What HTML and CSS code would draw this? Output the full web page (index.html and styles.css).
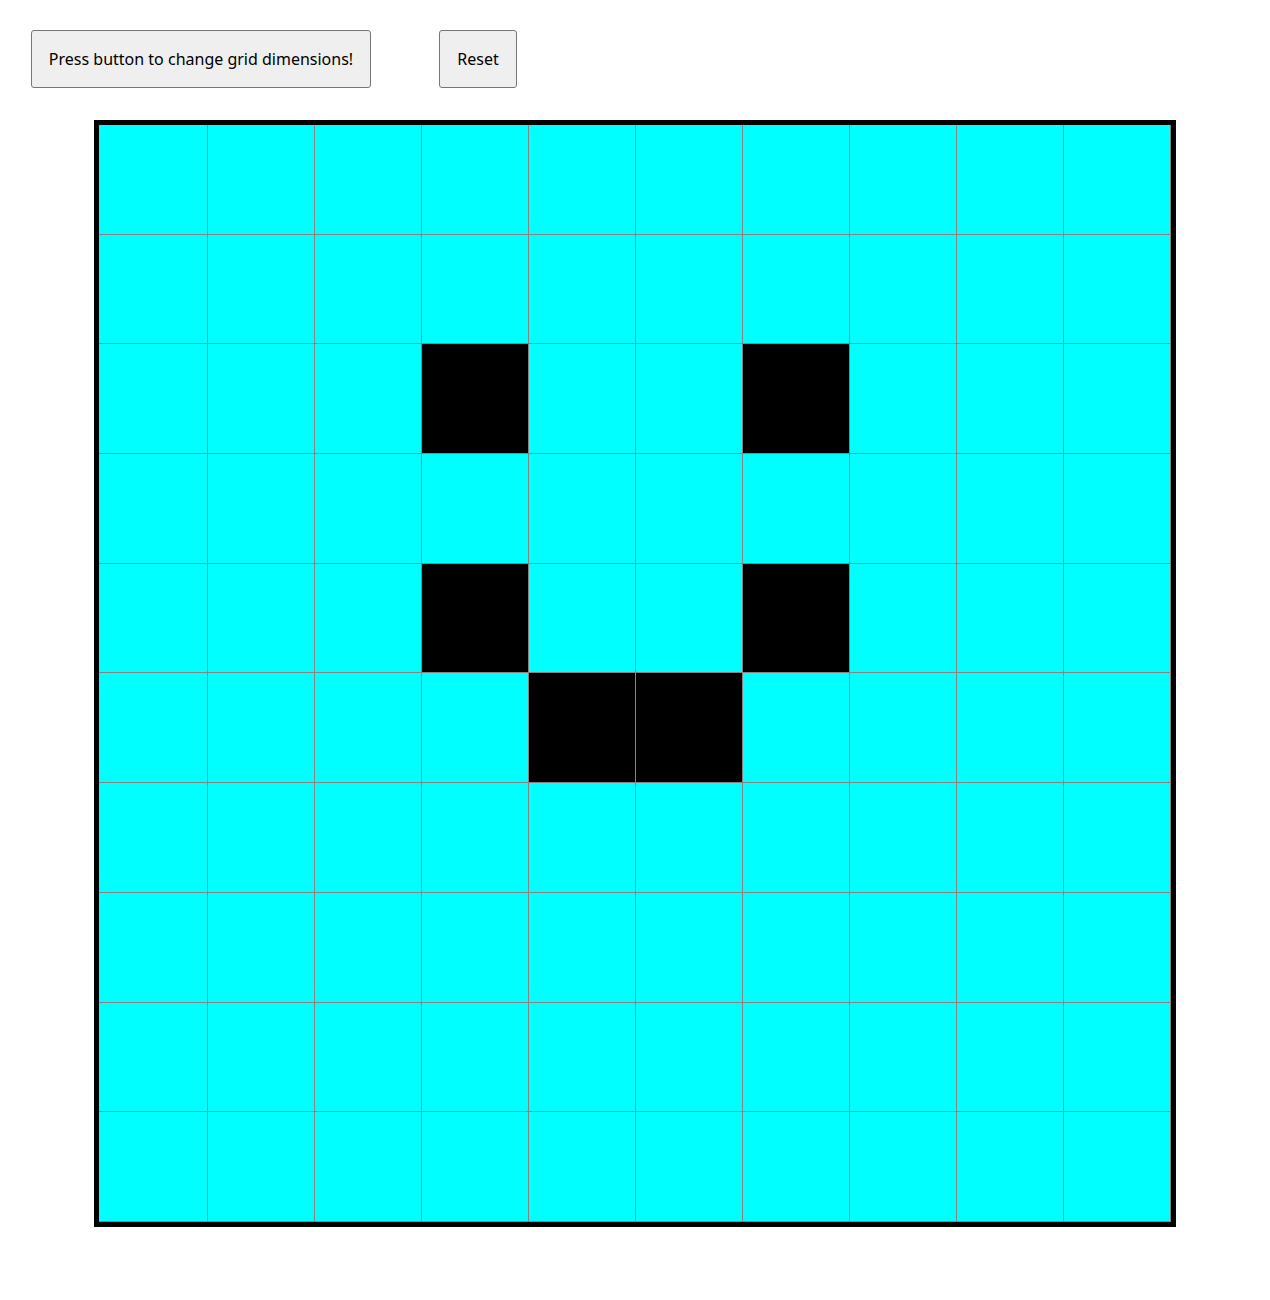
FILE: index.html
```html
<!DOCTYPE html>
<html>
<head>
<meta charset="utf-8">
<link rel="stylesheet" href="styles.css">
</head>
<body>
<div class="controls">
  <button class="btn btn-change">Press button to change grid dimensions!</button>
  <button class="btn btn-reset">Reset</button>
</div>
<div class="grid">
  <div class="cell"></div><div class="cell"></div><div class="cell"></div><div class="cell"></div><div class="cell"></div><div class="cell"></div><div class="cell"></div><div class="cell"></div><div class="cell"></div><div class="cell"></div>
  <div class="cell"></div><div class="cell"></div><div class="cell"></div><div class="cell"></div><div class="cell"></div><div class="cell"></div><div class="cell"></div><div class="cell"></div><div class="cell"></div><div class="cell"></div>
  <div class="cell"></div><div class="cell"></div><div class="cell"></div><div class="cell on"></div><div class="cell"></div><div class="cell"></div><div class="cell on"></div><div class="cell"></div><div class="cell"></div><div class="cell"></div>
  <div class="cell"></div><div class="cell"></div><div class="cell"></div><div class="cell"></div><div class="cell"></div><div class="cell"></div><div class="cell"></div><div class="cell"></div><div class="cell"></div><div class="cell"></div>
  <div class="cell"></div><div class="cell"></div><div class="cell"></div><div class="cell on"></div><div class="cell"></div><div class="cell"></div><div class="cell on"></div><div class="cell"></div><div class="cell"></div><div class="cell"></div>
  <div class="cell"></div><div class="cell"></div><div class="cell"></div><div class="cell"></div><div class="cell on"></div><div class="cell on"></div><div class="cell"></div><div class="cell"></div><div class="cell"></div><div class="cell"></div>
  <div class="cell"></div><div class="cell"></div><div class="cell"></div><div class="cell"></div><div class="cell"></div><div class="cell"></div><div class="cell"></div><div class="cell"></div><div class="cell"></div><div class="cell"></div>
  <div class="cell"></div><div class="cell"></div><div class="cell"></div><div class="cell"></div><div class="cell"></div><div class="cell"></div><div class="cell"></div><div class="cell"></div><div class="cell"></div><div class="cell"></div>
  <div class="cell"></div><div class="cell"></div><div class="cell"></div><div class="cell"></div><div class="cell"></div><div class="cell"></div><div class="cell"></div><div class="cell"></div><div class="cell"></div><div class="cell"></div>
  <div class="cell"></div><div class="cell"></div><div class="cell"></div><div class="cell"></div><div class="cell"></div><div class="cell"></div><div class="cell"></div><div class="cell"></div><div class="cell"></div><div class="cell"></div>
</div>
</body>
</html>
```

FILE: styles.css
```css
html, body {
  margin: 0;
  padding: 0;
  background: #ffffff;
  font-family: "Noto Sans", "Open Sans", sans-serif;
}

.controls {
  display: flex;
  gap: 68px;
  padding: 30px 0 0 31px;
}

.btn {
  box-sizing: border-box;
  height: 58px;
  padding: 0;
  font-family: "Noto Sans", "Open Sans", sans-serif;
  font-size: 16px;
  white-space: nowrap;
  color: #000000;
  background: #efefef;
  border: 1px solid #767676;
  border-radius: 3px;
}

.btn-change {
  width: 340px;
}

.btn-reset {
  width: 78px;
}

.grid {
  box-sizing: border-box;
  width: 1082px;
  height: 1107px;
  margin: 32px auto 0;
  border: 5px solid #000000;
  background: #00ffff;
  display: grid;
  grid-template-columns: 109px repeat(9, 107px);
  grid-template-rows: repeat(10, 1fr);
}

.cell {
  box-sizing: border-box;
  background: #00ffff;
  border-right: 1px solid #8c8080;
  border-bottom: 1px solid #8c8080;
}

.cell.on {
  background: #000000;
}
```
